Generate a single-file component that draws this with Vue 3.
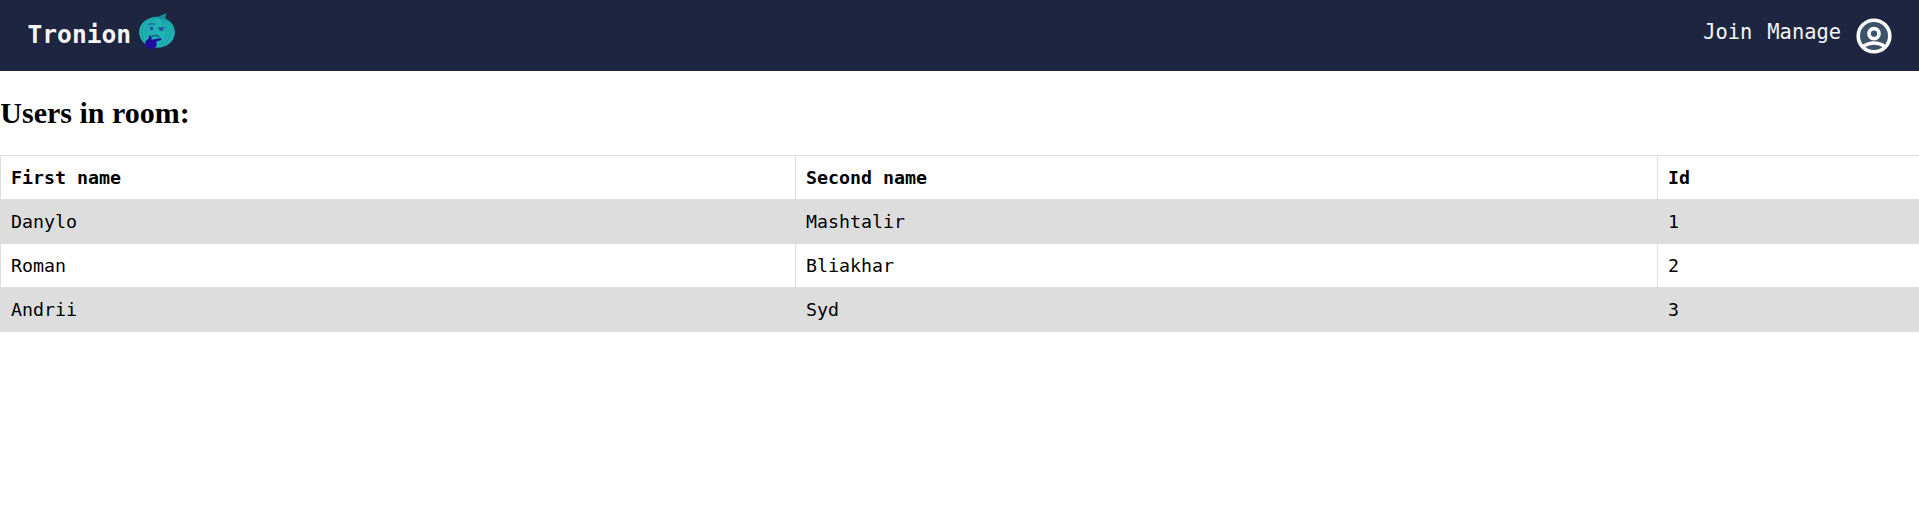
<script setup>
const users = [
  { id: 1, first: 'Danylo', second: 'Mashtalir' },
  { id: 2, first: 'Roman', second: 'Bliakhar' },
  { id: 3, first: 'Andrii', second: 'Syd' },
]
</script>

<template>
  <div class="page">
    <header class="bar">
      <div class="brand">
        <span class="name">Tronion</span>
        <svg class="logo" viewBox="0 0 36 36" width="36" height="36">
          <ellipse cx="18" cy="19.3" rx="17.9" ry="15.5" fill="#20b2b4" />
          <path d="M15 5.500C19.500 4.500 21.500 1.500 28.500 .2C26 2 26 4.500 27.500 7.200Q21 4.500 15 5.500Z" fill="#148f94" />
          <path d="M16 5C7 6 2.500 13 2.800 20c.2 4 1.500 7 3.700 9.500M17 5.500C10 8 7 14 7 20c0 2 .3 4 1 6M21 5c2 3 3 5 3 8M23 5.500c6 4 8.500 9 8.300 14s-3 10-7.500 13M22 5.500c4.500 4 6 9 5.700 14s-2.500 9-6.500 13M26 6.500c5.500 3 8 7.500 8.300 13" fill="none" stroke="#14969c" stroke-width=".8" />
          <path d="M9 11.500q3-1.200 7-.3M18.700 14.600q4 .8 7.500-.2" fill="none" stroke="#1c5f94" stroke-width="1.300" />
          <path d="M13 23.500q4-2.600 7.500.8" fill="none" stroke="#14687e" stroke-width="1.500" />
          <ellipse cx="12.500" cy="15.600" rx="1.700" ry="2" fill="#2a4fa0" />
          <ellipse cx="22.300" cy="16.200" rx="2" ry="1.900" fill="#2a4fa0" />
          <path d="M10.300 22.600Q12.600 22 12.600 24.500L12.500 26.800Q17 26 21.500 25Q23.300 25.500 22.200 27L17.300 28.500Q18.200 31 17.300 33.300Q15.500 35.900 11.500 35.900Q6.500 35.500 6.200 31Q5.900 28.500 7.500 27.200Q10 26.200 10 24Z" fill="#200d9d" />
        </svg>
      </div>
      <nav class="links">
        <a>Join</a>
        <a>Manage</a>
        <svg class="avatar" viewBox="0 0 36 36" width="36" height="36">
          <circle cx="18" cy="18" r="15.8" fill="#3e536b" stroke="#fff" stroke-width="3.6" />
          <circle cx="18" cy="15.700" r="5" fill="none" stroke="#fff" stroke-width="3.700" />
          <path d="M7 28.500Q12 25 18 25T29 28.500" fill="none" stroke="#fff" stroke-width="3.400" />
        </svg>
      </nav>
    </header>
    <h2>Users in room:</h2>
    <table>
      <colgroup><col class="c1"><col class="c2"><col class="c3"></colgroup>
      <tbody>
        <tr><th>First name</th><th>Second name</th><th>Id</th></tr>
        <tr v-for="u in users" :key="u.id">
          <td>{{ u.first }}</td><td>{{ u.second }}</td><td>{{ u.id }}</td>
        </tr>
      </tbody>
    </table>
  </div>
</template>

<style>
body { margin: 0; background: #fff; }
</style>

<style scoped>
.page { height: 518px; overflow: hidden; }
.bar {
  height: 71px;
  box-sizing: border-box;
  padding: 0 27px;
  background: #1d2541;
  color: #f5f5f5;
  display: flex;
  justify-content: space-between;
  font-family: "DejaVu Sans Mono", monospace;
}
.brand { display: flex; align-items: flex-start; }
.name { font-size: 24.6px; font-weight: bold; line-height: 30px; margin: 20px 0 0 .5px; }
.logo { margin: 13px 0 0 7.5px; }
.links { display: flex; align-items: flex-start; font-size: 20.4px; }
.links a { line-height: 26px; margin: 19px 15px 0 0; }
.links .avatar { margin: 18px 0 0 0; }
h2 {
  margin: 25px 0 25px .3px;
  font: bold 30px/34px "Liberation Serif", serif;
  color: #000;
}
table {
  width: 1921px;
  table-layout: fixed;
  border-collapse: collapse;
  font: 18.27px/27px "DejaVu Sans Mono", monospace;
  color: #000;
}
.c1 { width: 795px; }
.c2 { width: 862px; }
th, td {
  height: 27px;
  padding: 8px 10px;
  border: 1px solid #ddd;
  text-align: left;
}
tr:nth-child(even) { background: #ddd; }
</style>
